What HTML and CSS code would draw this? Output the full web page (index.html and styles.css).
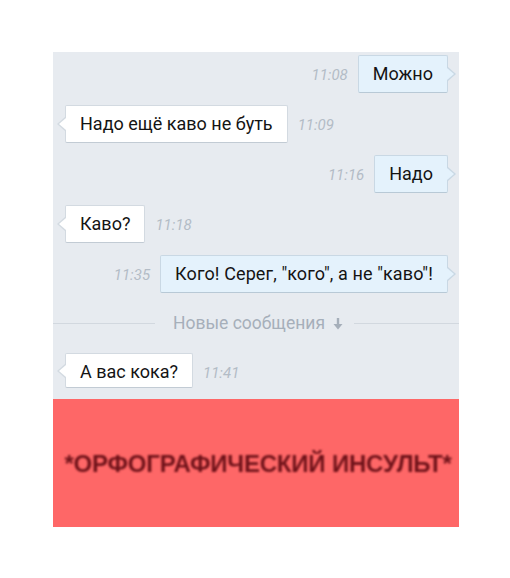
FILE: index.html
```html
<!DOCTYPE html>
<html lang="ru">
<head>
<meta charset="utf-8">
<link rel="stylesheet" href="styles.css">
</head>
<body>
<div class="screen">
  <div class="chat">
    <div class="row out"><span class="time">11:08</span><div class="bubble">Можно</div></div>
    <div class="row in"><div class="bubble">Надо ещё каво не буть</div><span class="time">11:09</span></div>
    <div class="row out"><span class="time">11:16</span><div class="bubble">Надо</div></div>
    <div class="row in"><div class="bubble">Каво?</div><span class="time">11:18</span></div>
    <div class="row out"><span class="time">11:35</span><div class="bubble wide">Кого! Серег, "кого", а не "каво"!</div></div>
    <div class="divider">
      <span class="line first"></span>
      <span class="label">Новые сообщения</span>
      <svg class="arrow" width="10" height="12" viewBox="0 0 10 12"><path d="M5 0V7" stroke="#a6afba" stroke-width="2.4"/><path d="M0.5 6H9.5L5 11.5Z" fill="#a6afba"/></svg>
      <span class="line"></span>
    </div>
    <div class="row in last"><div class="bubble">А вас кока?</div><span class="time">11:41</span></div>
  </div>
  <div class="banner"><span class="banner-text">*ОРФОГРАФИЧЕСКИЙ ИНСУЛЬТ*</span></div>
</div>
</body>
</html>
```
FILE: styles.css
```css
html, body {
  margin: 0;
  padding: 0;
  background: #ffffff;
}
.screen {
  margin: 52px 0 0 53px;
  width: 406px;
  font-family: Roboto, "Noto Sans", sans-serif;
}
.chat {
  background: #e7ebf0;
  padding: 3px 0 11px;
  display: flex;
  flex-direction: column;
}
.row {
  display: flex;
  align-items: baseline;
  gap: 10px;
  height: 38px;
  margin-bottom: 12px;
}
.row.out {
  justify-content: flex-end;
  padding-right: 11px;
}
.row.in {
  justify-content: flex-start;
  padding-left: 12px;
}
.row.last {
  margin-bottom: 0;
  height: 35px;
}
.bubble {
  position: relative;
  box-sizing: border-box;
  height: 100%;
  line-height: 36px;
  padding: 0 14px;
  font-size: 18px;
  color: #141414;
  border: 1px solid #d3dae1;
  border-bottom-color: #c2cbd4;
  border-radius: 2px;
  background: #ffffff;
}
.bubble.wide {
  letter-spacing: 0.12px;
}
.out .bubble {
  background: #e4f2fc;
  border-color: #c9d8e4;
  border-bottom-color: #b8c9d6;
}
.bubble::before,
.bubble::after {
  content: "";
  position: absolute;
  top: 50%;
  width: 0;
  height: 0;
  border-style: solid;
}
.out .bubble::before {
  right: -9px;
  margin-top: -7px;
  border-width: 7px 0 7px 8px;
  border-color: transparent transparent transparent #c9d8e4;
}
.out .bubble::after {
  right: -7px;
  margin-top: -6px;
  border-width: 6px 0 6px 7px;
  border-color: transparent transparent transparent #e4f2fc;
}
.in .bubble::before {
  left: -9px;
  margin-top: -7px;
  border-width: 7px 8px 7px 0;
  border-color: transparent #d3dae1 transparent transparent;
}
.in .bubble::after {
  left: -7px;
  margin-top: -6px;
  border-width: 6px 7px 6px 0;
  border-color: transparent #ffffff transparent transparent;
}
.time {
  font-size: 15px;
  font-style: italic;
  color: #b3bcc6;
}
.divider {
  display: flex;
  align-items: center;
  height: 22px;
  margin: 7px 0 19px;
}
.line {
  flex: 1;
  height: 1px;
  background: #d2d8df;
}
.line.first {
  flex: 0 0 102px;
}
.label {
  padding: 0 8px 0 18px;
  font-size: 17.5px;
  color: #a6afba;
  white-space: nowrap;
}
.arrow {
  margin-right: 11px;
  margin-top: 1px;
}
.banner {
  height: 128px;
  background: #fe6767;
  display: flex;
  align-items: center;
  justify-content: center;
}
.banner-text {
  font-family: "Liberation Sans", Arial, sans-serif;
  font-weight: bold;
  font-size: 24px;
  color: #6e1219;
  letter-spacing: -0.2px;
  filter: blur(0.9px);
  margin-top: 2px;
  margin-left: 4px;
}
```
